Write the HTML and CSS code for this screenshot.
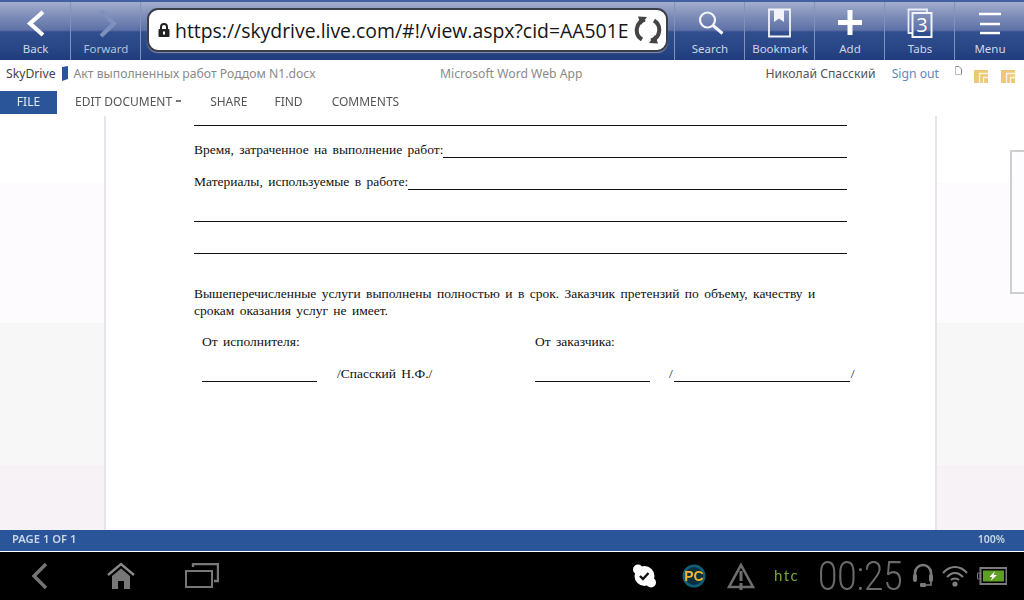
FILE: index.html
```html
<!DOCTYPE html>
<html lang="ru">
<head>
<meta charset="utf-8">
<title>SkyDrive</title>
<link rel="stylesheet" href="styles.css">
</head>
<body>
<div class="screen">
  <header class="browser">
    <div class="tool"><svg class="tool-icon" viewBox="0 0 40 32"><path d="M27 3 L14 14.500 L27 26" fill="none" stroke="#fff" stroke-width="4.200"/></svg><span>Back</span></div>
    <div class="tool tool-line"><svg class="tool-icon" viewBox="0 0 40 32"><path d="M15 2 L28 14.500 L15 27" fill="none" stroke="#7f90bd" stroke-width="4.200"/></svg><span class="dim">Forward</span></div>
    <div class="url-wrap">
      <div class="url">
        <svg class="lock" viewBox="0 0 12 14"><path d="M3 6V4a3 3 0 0 1 6 0v2" fill="none" stroke="#222" stroke-width="2"/><rect x="0.5" y="6" width="11" height="8" rx="1" fill="#222"/><rect x="5" y="8.5" width="2" height="3" fill="#fff"/></svg>
        <span class="url-text">https://skydrive.live.com/#!/view.aspx?cid=AA501E</span>
        <svg class="reload" viewBox="0 0 28 28"><path d="M11 3.500A11 11 0 0 0 8 23.500" fill="none" stroke="#444" stroke-width="4"/><path d="M4 0.500 L13 1 L7 9Z" fill="#444"/><path d="M17 24.500A11 11 0 0 0 20 4.500" fill="none" stroke="#444" stroke-width="4"/><path d="M24 27.500 L15 27 L21 19Z" fill="#444"/></svg>
      </div>
    </div>
    <div class="tool tool-line"><svg class="tool-icon" viewBox="0 0 40 32"><circle cx="17.500" cy="11" r="7.500" fill="none" stroke="#f2f4fa" stroke-width="2.200"/><path d="M23 16.500 L32.500 24.500" stroke="#f2f4fa" stroke-width="3"/></svg><span>Search</span></div>
    <div class="tool tool-line"><svg class="tool-icon" viewBox="0 0 40 32"><path d="M9 0.500H30V27.500H9Z" fill="none" stroke="#f2f4fa" stroke-width="1.800"/><path d="M14 0H24V13L19 9.500 14 13Z" fill="#f2f4fa"/></svg><span>Bookmark</span></div>
    <div class="tool tool-line"><svg class="tool-icon" viewBox="0 0 40 32"><path d="M20 1V26M8 13.500H32" stroke="#fff" stroke-width="5"/></svg><span>Add</span></div>
    <div class="tool tool-line"><svg class="tool-icon" viewBox="0 0 40 32"><path d="M12 24H8.500V0.500H27V3" fill="none" stroke="#e8ecf6" stroke-width="1.800"/><rect x="12.500" y="4" width="19" height="24" fill="none" stroke="#f2f4fa" stroke-width="2"/><text x="22" y="23" class="tab-count">3</text></svg><span>Tabs</span></div>
    <div class="tool tool-line"><svg class="tool-icon" viewBox="0 0 40 32"><path d="M9 5H31M10 15H30M10 24H30" stroke="#fff" stroke-width="2.400"/></svg><span>Menu</span></div>
  </header>

  <div class="app-head">
    <div class="crumbs">
      <span class="sky">SkyDrive</span>
      <svg class="flag" viewBox="0 0 6 15"><path d="M0 1 L6 0V13L0 15Z" fill="#2a5699"/></svg>
      <span class="doc-title">Акт выполненных работ Роддом N1.docx</span>
    </div>
    <div class="app-name">Microsoft Word Web App</div>
    <div class="user-box">
      <span class="user">Николай Спасский</span>
      <span class="signout">Sign out</span>
      <svg class="mini-doc" viewBox="0 0 7 9"><path d="M0.5 0.5H4L6.5 3V8.5" fill="none" stroke="#888"/><path d="M0.5 0.5V8.5H6.5" fill="none" stroke="#bbb"/></svg>
      <svg class="gold first" viewBox="0 0 14 13"><rect width="14" height="13" fill="#edc878"/><path d="M14 3.500H5.500V13M14 7.500H9.500V13" fill="none" stroke="#fdf6e6" stroke-width="1.300"/></svg>
      <svg class="gold" viewBox="0 0 14 13"><rect width="14" height="13" fill="#edc878"/><path d="M14 3.500H5.500V13M14 7.500H9.500V13" fill="none" stroke="#fdf6e6" stroke-width="1.300"/></svg>
    </div>
  </div>

  <nav class="ribbon">
    <div class="file">FILE</div>
    <div class="tab tab-edit">EDIT DOCUMENT<span class="caret"></span></div>
    <div class="tab tab-share">SHARE</div>
    <div class="tab tab-find">FIND</div>
    <div class="tab tab-comments">COMMENTS</div>
  </nav>

  <main class="canvas">
    <article class="page">
      <div class="rule-row rule-first"></div>
      <div class="text-row"><span>Время, затраченное на выполнение работ:</span><i></i></div>
      <div class="text-row"><span>Материалы, используемые в работе:</span><i></i></div>
      <div class="rule-row"></div>
      <div class="rule-row"></div>
      <p class="para">Вышеперечисленные услуги выполнены полностью и в срок. Заказчик претензий по объему, качеству и<br>срокам оказания услуг не имеет.</p>
      <div class="sign-grid">
        <div>От исполнителя:</div>
        <div>От заказчика:</div>
        <div class="sign"><i class="sign-line"></i><span class="sign-name">/Спасский Н.Ф./</span></div>
        <div class="sign"><i class="sign-line"></i><span class="slash">/</span><i class="sign-long"></i><span>/</span></div>
      </div>
    </article>
    <div class="next-page"></div>
  </main>

  <div class="status"><span class="pages">PAGE 1 OF 1</span><span>100%</span></div>

  <footer class="system">
    <svg class="sys-back" viewBox="0 0 18 28"><path d="M15 2 L3 14 L15 26" fill="none" stroke="#757575" stroke-width="3.400"/></svg>
    <svg class="sys-home" viewBox="0 0 28 28"><path d="M1 13 L14 2 L27 13" fill="none" stroke="#8a8a8a" stroke-width="2.400"/><path d="M5 14 L14 6.500 L23 14V27H17V19H11V27H5Z" fill="#777"/></svg>
    <svg class="sys-recent" viewBox="0 0 34 26"><path d="M8 4V1H33V18H29" fill="none" stroke="#777" stroke-width="2.400"/><rect x="1" y="8" width="26" height="16" fill="none" stroke="#777" stroke-width="2"/></svg>
    <div class="tray">
      <svg class="t-skype" viewBox="0 0 23 24"><circle cx="11.500" cy="12" r="10" fill="#fff"/><circle cx="5" cy="5.500" r="5" fill="#fff"/><circle cx="18" cy="18.500" r="5" fill="#fff"/><path d="M7 12 L10 15 L15.500 9" fill="none" stroke="#111" stroke-width="2.400"/></svg>
      <svg class="t-pc" viewBox="0 0 24 24"><circle cx="12" cy="12" r="11.500" fill="#0f5f78"/><circle cx="12" cy="12" r="9" fill="#0b2f3e"/><text x="12" y="17" class="pc-text">PC</text></svg>
      <svg class="t-warn" viewBox="0 0 28 28"><path d="M14 3 L26 25H2Z" fill="none" stroke="#6e6e6e" stroke-width="2.600"/><path d="M12.500 9H15.500V19H12.500ZM12.500 21H15.500V28H12.500Z" fill="#6e6e6e"/></svg>
      <span class="htc">htc</span>
      <span class="clock">00:25</span>
      <svg class="t-head" viewBox="0 0 22 26"><path d="M3 15V10a8 8 0 0 1 16 0V15" fill="none" stroke="#7a7a7a" stroke-width="2.600"/><rect x="1" y="11" width="4" height="8" rx="2" fill="#7a7a7a"/><rect x="17" y="11" width="4" height="8" rx="2" fill="#7a7a7a"/><path d="M19 18V22H12" fill="none" stroke="#7a7a7a" stroke-width="1.600"/><rect x="8" y="20" width="6" height="4" rx="1" fill="#7a7a7a"/></svg>
      <svg class="t-wifi" viewBox="0 0 26 22"><path d="M1 8C8 0 18 0 25 8M5 12C10 6.500 16 6.500 21 12M9 15C11 13 15 13 17 15" fill="none" stroke="#808080" stroke-width="2"/><circle cx="13" cy="19" r="2.600" fill="#808080"/></svg>
      <svg class="t-batt" viewBox="0 0 30 18"><path d="M0.500 6H3V12H0.500Z" fill="none" stroke="#777"/><rect x="3.500" y="1" width="26" height="16" fill="none" stroke="#7b7b7b" stroke-width="2"/><rect x="6" y="3.500" width="21" height="11" fill="#5da023"/><path d="M18 4 L12.500 10H15.500L13.500 14 20 8H16.500Z" fill="#fff"/></svg>
    </div>
  </footer>
</div>
</body>
</html>
```

FILE: styles.css
```css
* { box-sizing: border-box; }
html, body { margin: 0; padding: 0; background: #000; }
.screen {
  width: 1024px;
  height: 600px;
  display: flex;
  flex-direction: column;
  overflow: hidden;
  font-family: "Noto Sans", "Open Sans", sans-serif;
  filter: blur(0.3px);
}

/* browser toolbar */
.browser {
  height: 60px;
  flex: none;
  display: flex;
  border-top: 2px solid #45609f;
  background: linear-gradient(#a3aecf 0, #7e8db8 14px, #5f72a7 28px, #314e8e 30px, #2a4787 44px, #1f3b7b 58px);
}
.tool {
  width: 70px;
  flex: none;
  display: flex;
  flex-direction: column;
  align-items: center;
  padding: 7px 0 0 1px;
  font-size: 11.5px;
  line-height: 16px;
  color: #cfd6e6;
}
.tool-line { border-left: 1px solid #8392ba; }
.tool .dim { color: #b6c0d8; }
.tool-icon { width: 40px; height: 32px; display: block; overflow: visible; }
.tab-count { font: 400 20px "Open Sans", sans-serif; fill: #fff; text-anchor: middle; }
.url-wrap { flex: 1; display: flex; align-items: flex-start; padding: 6px 6px 0 6px; border-left: 1px solid #8392ba; }
.url {
  width: 100%;
  height: 44px;
  background: #fff;
  border-radius: 11px;
  border: 2px solid #3b3f4a;
  box-shadow: 0 1px 1px #8a94b0;
  display: flex;
  align-items: center;
  padding-left: 9px;
}
.lock { width: 12px; height: 14px; flex: none; }
.url-text { font-family: "Open Sans", sans-serif; font-size: 19.4px; color: #151515; margin-left: 5px; white-space: nowrap; }
.reload { width: 28px; height: 28px; flex: none; margin-left: 5px; }

/* app header */
.app-head {
  height: 30px;
  flex: none;
  display: flex;
  align-items: center;
  padding-bottom: 3px;
  background: #fff;
  font-size: 12.2px;
}
.crumbs { width: 440px; flex: none; display: flex; align-items: center; padding-left: 6px; }
.sky { color: #444; }
.flag { width: 6px; height: 15px; margin-left: 6px; }
.doc-title { color: #8a8a8a; margin-left: 6px; white-space: nowrap; }
.app-name { color: #8a8a8a; white-space: nowrap; }
.user-box { margin-left: auto; display: flex; align-items: center; padding-right: 9px; }
.user { color: #555; }
.signout { color: #5f88bc; margin-left: 16px; }
.mini-doc { width: 7px; height: 9px; margin: -6px 0 0 16px; }
.gold { width: 14px; height: 13px; margin: 6px 0 0 13px; }
.gold.first { margin-left: 12px; }

/* ribbon */
.ribbon {
  height: 24px;
  flex: none;
  display: flex;
  background: #fff;
  font-size: 12px;
  color: #555;
  line-height: 21px;
}
.file {
  width: 57px;
  margin-top: 1px;
  background: #2a5699;
  color: #e4eaf4;
  text-align: center;
}
.tab { white-space: nowrap; margin-top: 1px; }
.tab-edit { margin-left: 18px; display: flex; align-items: flex-start; }
.caret { width: 5px; height: 2px; margin: 9px 0 0 4px; background: #777; }
.tab-share { margin-left: 29px; }
.tab-find { margin-left: 27px; }
.tab-comments { margin-left: 29px; }

/* document */
.canvas {
  flex: 1;
  min-height: 0;
  position: relative;
  padding: 2px 0 0 104px;
  background: linear-gradient(#fff 0 69px, #fdfbfd 69px 209px, #f7f7f7 209px 351px, #f7f2f5 351px);
}
.page {
  width: 833px;
  height: 100%;
  background: #fff;
  border: solid #e6e6ea;
  border-width: 0 2px;
  padding-left: 88px;
  font-family: "Liberation Serif", serif;
  font-size: 13.5px;
  word-spacing: 2px;
  color: #111;
}
.rule-row {
  width: 653px;
  height: 32px;
  border-bottom: 1px solid #111;
}
.rule-first { height: 10px; }
.text-row {
  width: 653px;
  height: 32px;
  display: flex;
  align-items: flex-end;
  line-height: 16px;
}
.text-row i { flex: 1; border-bottom: 1px solid #111; }
.para { margin: 31px 0 0; line-height: 17px; white-space: nowrap; }
.sign-grid {
  display: grid;
  grid-template-columns: 333px auto;
  margin: 14px 0 0 8px;
  row-gap: 16px;
  line-height: 17px;
}
.sign { display: flex; align-items: flex-end; height: 16px; }
.sign-line { width: 115px; border-bottom: 1px solid #111; }
.sign-name { margin-left: 20px; line-height: 16px; }
.slash { margin-left: 19px; }
.sign-long { width: 176px; margin: 0 1px; border-bottom: 1px solid #111; }
.next-page {
  position: absolute;
  left: 1010px;
  top: 36px;
  width: 20px;
  height: 144px;
  border: 2px solid #cfcfcf;
  background: #fdfcfe;
}

/* status */
.status {
  height: 22px;
  flex: none;
  display: flex;
  justify-content: space-between;
  align-items: center;
  padding: 0 19px 4px 12px;
  background: #2a5699;
  border-bottom: 1px solid #fff;
  font-size: 10.5px;
  font-weight: 600;
  color: #cbd6e8;
}
.pages { font-size: 11.2px; }

/* system bar */
.system {
  height: 48px;
  flex: none;
  background: #000;
  display: flex;
  align-items: center;
}
.sys-back { width: 18px; height: 28px; margin-left: 31px; }
.sys-home { width: 28px; height: 28px; margin-left: 58px; }
.sys-recent { width: 34px; height: 26px; margin-left: 50px; }
.tray { margin-left: auto; display: flex; align-items: center; padding-right: 17px; }
.t-skype { width: 23px; height: 24px; }
.t-pc { width: 24px; height: 24px; margin-left: 26px; }
.pc-text { font: 700 14px "Liberation Sans", sans-serif; fill: #f1b52c; text-anchor: middle; }
.t-warn { width: 28px; height: 28px; margin-left: 21px; }
.htc { margin: -2px 0 0 19px; width: 30px; font-family: "Lato", sans-serif; font-size: 15px; letter-spacing: 1.5px; color: #79a83a; }
.clock {
  width: 84px;
  margin-left: 14px;
  font-family: "Roboto", sans-serif;
  font-weight: 300;
  font-size: 41px;
  line-height: 48px;
  color: #6b6b6b;
  white-space: nowrap;
  transform: scaleX(0.85);
  transform-origin: left center;
}
.t-head { width: 22px; height: 26px; margin-left: 10px; }
.t-wifi { width: 26px; height: 22px; margin-left: 8px; }
.t-batt { width: 30px; height: 18px; margin-left: 9px; }
```
